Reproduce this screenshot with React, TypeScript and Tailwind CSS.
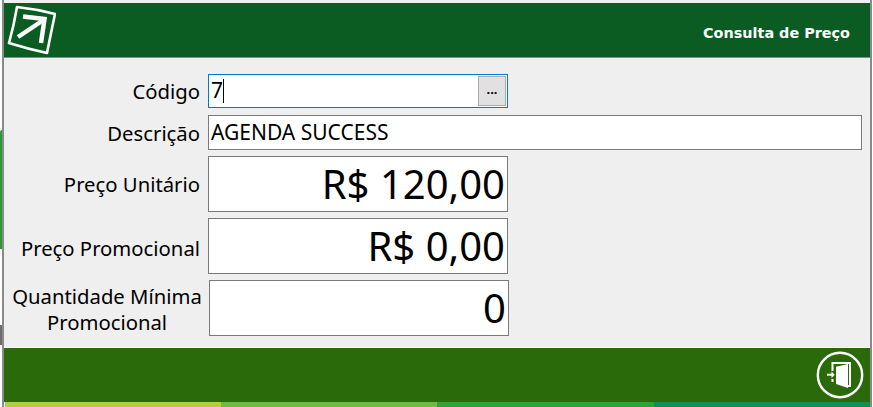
const labelFont = "font-['Noto_Sans','Open_Sans',sans-serif]"

function Logo() {
  return (
    <svg width="52" height="52" viewBox="0 0 52 52" className="shrink-0" fill="none">
      <path d="M13 4 Q32 6 51 11 Q47 30 43 50 Q24 46 5 40 Q10 22 13 4 Z" stroke="#fff" strokeWidth="2.6" strokeLinejoin="round" />
      <path d="M14 34 L38 18" stroke="#fff" strokeWidth="4.5" />
      <path d="M19 13.5 L40.5 16 L37 40" stroke="#fff" strokeWidth="4.5" />
    </svg>
  )
}

function ExitIcon() {
  return (
    <svg width="48" height="48" viewBox="0 0 48 48" fill="none">
      <circle cx="24" cy="24" r="22.2" stroke="#fff" strokeWidth="2.4" />
      <path d="M16.5 20 V12 H34 V35 H32 M16.5 28 V31" stroke="#fff" strokeWidth="2" />
      <path d="M20 15.7 L32 13 V37 L20 33 Z" fill="#fff" />
      <path d="M11 23.7 H16" stroke="#fff" strokeWidth="2" />
      <path d="M15.5 20.5 L18.7 23.7 L15.5 27 Z" fill="#fff" />
    </svg>
  )
}

function Row({ label, children, className }: { label: React.ReactNode; children: React.ReactNode; className?: string }) {
  return (
    <div className={`flex items-center ${className ?? ''}`}>
      <div className="w-[204px] shrink-0 pr-[8px] text-right text-[20.3px] leading-[26px] text-black">{label}</div>
      {children}
    </div>
  )
}

function PriceBox({ value, className }: { value: string; className?: string }) {
  return (
    <div className={`flex h-[56px] w-[300px] items-center justify-end border border-[#7a7a7a] bg-white pr-[2px] text-[40px] leading-none text-black ${className ?? ''}`}>
      {value}
    </div>
  )
}

export default function App() {
  return (
    <div className={`relative flex h-[407px] w-[873px] bg-white pl-[2px] pr-px ${labelFont}`}>
      {/* pedaco da janela de tras */}
      <div className="absolute left-0 top-[130px] h-[119px] w-[2px] rounded-tl-full bg-[#2e9a3a]" />
      <div className="absolute left-0 top-[325px] h-[20px] w-[2px] bg-[#6e6e6e]" />

      <div className="flex min-w-0 flex-1 flex-col border-l-2 border-r-2 border-l-[#8a8a8a] border-r-[#8a8a8a] bg-[#efefef] pt-[3px]">
        <div className="flex h-[55px] shrink-0 items-start justify-between border-b border-[#8a8a8a] bg-[#0a5c22]">
          <Logo />
          <span className="mr-[20px] mt-[20px] font-['DejaVu_Sans',sans-serif] text-[14.4px] font-bold leading-5 text-white">Consulta de Preço</span>
        </div>
        <div className="flex flex-1 flex-col pt-[16px]">
          <Row label="Código">
            <div className="flex h-[34px] w-[300px] items-center border border-[#0078d7] bg-white pl-[2px] pr-px text-[21px]">
              <span>7</span>
              <span className="h-[24px] w-px bg-black" />
              <button type="button" className="ml-auto flex h-[30px] w-[28px] items-center justify-center border border-[#adadad] bg-[#e1e1e1] pb-1 text-[13px] font-bold leading-none text-black">...</button>
            </div>
          </Row>
          <Row label="Descrição" className="mt-[7px]">
            <div className="flex h-[35px] w-[654px] items-center border border-[#7a7a7a] bg-white pl-[2px] text-[21px] text-black">AGENDA SUCCESS</div>
          </Row>
          <Row label="Preço Unitário" className="mt-[6px]">
            <PriceBox value="R$ 120,00" />
          </Row>
          <Row label={<span className="relative top-[2px]">Preço Promocional</span>} className="mt-[6px]">
            <PriceBox value="R$ 0,00" />
          </Row>
          <Row label={<span className="relative left-[5px] top-[1px] block whitespace-nowrap text-center leading-[26px]">Quantidade Mínima<br />Promocional</span>} className="mt-[6px]">
            <PriceBox value="0" className="ml-px" />
          </Row>
        </div>
        <div className="flex h-[55px] shrink-0 items-center justify-end border-t border-white bg-[#2a6a0a] pr-[6px]">
          <ExitIcon />
        </div>
        <div className="ml-px flex h-[5px] shrink-0">
          <div className="w-[216px] bg-[#b5cc3c]" />
          <div className="w-[216px] bg-[#6fbb44]" />
          <div className="w-[217px] bg-[#2ba538]" />
          <div className="flex-1 bg-[#0f8f5a]" />
        </div>
      </div>
    </div>
  )
}
